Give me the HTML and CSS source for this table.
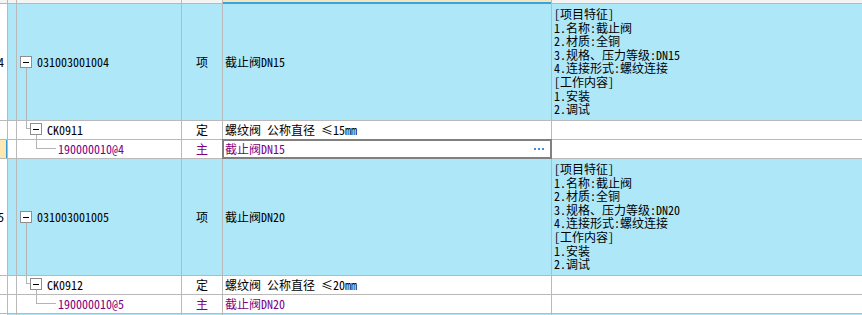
FILE: index.html
```
<!DOCTYPE html>
<html lang="zh">
<head>
<meta charset="utf-8">
<link rel="stylesheet" href="styles.css">
</head>
<body>
<div class="sheet">
  <div class="hd"></div><div class="hd"></div><div class="hd"></div><div class="hd"></div><div class="hd hd-sel"></div><div class="hd"></div>

  <div class="num">4</div>
  <div class="c blue"></div>
  <div class="c blue tree lv0"><div class="node"><span class="pad"></span><span class="box"></span><span class="stem"></span></div><span class="label">031003001004</span></div>
  <div class="c blue mid">项</div>
  <div class="c blue name">截止阀DN15</div>
  <div class="c blue desc">[项目特征]
1.名称:截止阀
2.材质:全铜
3.规格、压力等级:DN15
4.连接形式:螺纹连接
[工作内容]
1.安装
2.调试</div>

  <div class="num"></div>
  <div class="c"></div>
  <div class="c tree lv1"><span class="elbow"></span><div class="node sm"><span class="pad"></span><span class="box"></span><span class="stem"></span></div><span class="label">CK0911</span></div>
  <div class="c mid">定</div>
  <div class="c name">螺纹阀 公称直径 ≤15mm</div>
  <div class="c"></div>

  <div class="num cur"></div>
  <div class="c"></div>
  <div class="c tree lv2"><span class="elbow long"></span><span class="label purple">190000010@4</span></div>
  <div class="c mid purple">主</div>
  <div class="c name purple selected"><span>截止阀DN15</span><span class="dots"><i></i><i></i><i></i></span></div>
  <div class="c"></div>

  <div class="num">5</div>
  <div class="c blue"></div>
  <div class="c blue tree lv0"><div class="node"><span class="pad"></span><span class="box"></span><span class="stem"></span></div><span class="label">031003001005</span></div>
  <div class="c blue mid">项</div>
  <div class="c blue name">截止阀DN20</div>
  <div class="c blue desc">[项目特征]
1.名称:截止阀
2.材质:全铜
3.规格、压力等级:DN20
4.连接形式:螺纹连接
[工作内容]
1.安装
2.调试</div>

  <div class="num"></div>
  <div class="c"></div>
  <div class="c tree lv1"><span class="elbow"></span><div class="node sm"><span class="pad"></span><span class="box"></span><span class="stem"></span></div><span class="label">CK0912</span></div>
  <div class="c mid">定</div>
  <div class="c name">螺纹阀 公称直径 ≤20mm</div>
  <div class="c"></div>

  <div class="num"></div>
  <div class="c"></div>
  <div class="c tree lv2"><span class="elbow long"></span><span class="label purple">190000010@5</span></div>
  <div class="c mid purple">主</div>
  <div class="c name purple">截止阀DN20</div>
  <div class="c"></div>

  <div class="num"></div>
  <div class="c blue"></div>
  <div class="c blue"></div>
  <div class="c blue"></div>
  <div class="c blue"></div>
  <div class="c blue"></div>
</div>
</body>
</html>
```
FILE: styles.css
```
html, body {
  margin: 0;
  padding: 0;
  background: #ffffff;
  overflow: hidden;
}

.sheet {
  display: grid;
  grid-template-columns: 7px 8px 164px 40px 328px 1fr;
  grid-template-rows: 3px 116px 18px 18px 116px 18px 18px 1px;
  gap: 1px;
  background: #b9b9b9;
  width: 862px;
  font-family: "Noto Sans Mono CJK SC", "Noto Sans CJK SC", "Liberation Mono", monospace;
  font-size: 12px;
  line-height: 14px;
  color: #000000;
}

.hd {
  background: #f4f4f4;
}

.hd-sel {
  background: #f3e6bd;
  border-bottom: 1px solid #3aa3d8;
  box-shadow: 0 1px 0 #3aa3d8;
}

.num {
  background: #ffffff;
  overflow: hidden;
  white-space: nowrap;
  text-align: right;
  padding-right: 3px;
  display: flex;
  align-items: center;
  justify-content: flex-end;
}

.num.cur {
  background: #fde8b2;
  position: relative;
}

.num.cur::after {
  content: "";
  position: absolute;
  right: -1px;
  top: 0;
  bottom: 0;
  width: 2px;
  background: #2f9ad4;
}

.c {
  background: #ffffff;
  overflow: hidden;
  white-space: nowrap;
}

.c.blue {
  background: #aee7f8;
}

.mid {
  display: flex;
  align-items: center;
  justify-content: center;
}

.name {
  display: flex;
  align-items: center;
  padding-left: 2px;
}

.desc {
  white-space: pre;
  padding: 3px 2px 0 2px;
  line-height: 13.6px;
}

.purple {
  color: #800080;
}

.selected {
  outline: 2px solid #808080;
  outline-offset: -1px;
  justify-content: space-between;
  padding-right: 7px;
  position: relative;
  z-index: 1;
}

.dots {
  display: flex;
  gap: 2px;
}

.dots i {
  display: block;
  width: 2px;
  height: 2px;
  background: #3f8fd6;
}

/* tree column */
.tree {
  display: flex;
  align-items: stretch;
}

.tree.lv0 {
  padding-left: 3px;
}

.node {
  display: flex;
  flex-direction: column;
  width: 12px;
  flex: none;
}

.node .pad {
  flex: 1;
}

.node.sm .pad {
  flex: none;
  height: 2px;
}

.box {
  display: block;
  width: 12px;
  height: 12px;
  box-sizing: border-box;
  border: 1px solid #8e8e8e;
  background: #ffffff;
  position: relative;
  flex: none;
}

.box::before {
  content: "";
  position: absolute;
  left: 2px;
  right: 2px;
  top: 5px;
  height: 1px;
  background: #000000;
}

.stem {
  flex: 1;
  margin-left: 6px;
  border-left: 1px solid #b4b4b4;
}

.elbow {
  flex: none;
  align-self: flex-start;
  box-sizing: border-box;
  margin-left: 9px;
  width: 4px;
  height: 8px;
  border-left: 1px solid #b4b4b4;
  border-bottom: 1px solid #b4b4b4;
}

.elbow.long {
  margin-left: 19px;
  width: 20px;
  height: 9px;
}

.label {
  align-self: center;
  margin-left: 5px;
}

.lv2 .label {
  margin-left: 2px;
}
```
